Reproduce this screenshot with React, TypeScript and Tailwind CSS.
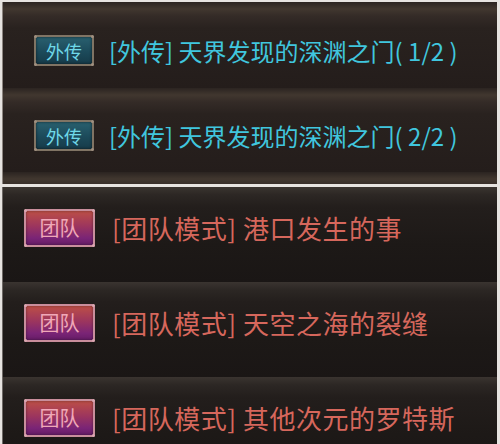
const font = { fontFamily: '"Noto Sans CJK SC", "Noto Sans", sans-serif' };

function QuestBadge({ kind }: { kind: "side" | "team" }) {
  if (kind === "side") {
    return (
      <div className="relative flex h-[31px] w-[60px] shrink-0 items-center justify-center rounded-[3px] border-2 border-[#807464] bg-[linear-gradient(180deg,#29606f_0%,#1c4a5a_55%,#163b49_100%)] shadow-[inset_0_0_3px_rgba(0,0,0,0.6)]">
        <span className="text-[18px] leading-none text-[#6fd8e8]">外传</span>
        <Corners color="bg-[#a09080]" />
      </div>
    );
  }
  return (
    <div className="relative flex h-[38px] w-[71px] shrink-0 items-center justify-center rounded-[3px] border-2 border-[#c98e9c] bg-[linear-gradient(180deg,#bd4f46_0%,#9c355e_45%,#7a2476_80%,#661c66_100%)] shadow-[inset_0_0_3px_rgba(0,0,0,0.4)]">
      <span className="text-[20px] leading-none text-[#f0a8b8]">团队</span>
      <Corners color="bg-[#dca8b2]" />
    </div>
  );
}

function Corners({ color }: { color: string }) {
  return (
    <>
      <span className={`absolute -left-[2px] -top-[2px] h-[3px] w-[3px] rounded-full ${color}`} />
      <span className={`absolute -right-[2px] -top-[2px] h-[3px] w-[3px] rounded-full ${color}`} />
      <span className={`absolute -bottom-[2px] -left-[2px] h-[3px] w-[3px] rounded-full ${color}`} />
      <span className={`absolute -bottom-[2px] -right-[2px] h-[3px] w-[3px] rounded-full ${color}`} />
    </>
  );
}

const sideQuests = ["1/2", "2/2"];
const teamQuests = ["港口发生的事", "天空之海的裂缝", "其他次元的罗特斯"];

export default function App() {
  return (
    <div className="flex h-[444px] w-[500px] flex-col gap-[3px] overflow-hidden bg-[#e6e3e0] pl-[2px] pr-[3px] pt-[2px]" style={font}>
      <div className="h-[182px] shrink-0 overflow-hidden border-l border-[#8c8580] bg-[#2a2320]">
        {sideQuests.map((part, i) => (
          <div
            key={part}
            className={`flex items-center gap-[15px] pl-[31px] pt-[11px] bg-[linear-gradient(180deg,#2b2421_0px,#41372f_7px,#342b27_14px,#29221f_26px,#241d1b_100%)] ${i === 0 ? "h-[86px]" : "h-[84px]"}`}
          >
            <QuestBadge kind="side" />
            <span className="whitespace-nowrap text-[24px] leading-none text-[#40c6de]">
              [外传] 天界发现的深渊之门( {part} )
            </span>
          </div>
        ))}
        <div className="h-[20px] bg-[linear-gradient(180deg,#2b2421_0px,#41372f_7px,#342b27_14px)]" />
      </div>
      <div className="flex-1 overflow-hidden border-l border-[#6e6966] bg-[#1e1a18]">
        {teamQuests.map((q) => (
          <div
            key={q}
            className="h-[95px] shrink-0 bg-[linear-gradient(180deg,#3a3430_0px,#2c2724_8px,#231e1c_20px,#1d1917_60%,#1a1615_100%)]"
          >
            <div className="flex h-[82px] items-center gap-[17px] pl-[21px]">
              <QuestBadge kind="team" />
              <span className="whitespace-nowrap text-[26px] leading-none tracking-[0.5px] text-[#d6675c]">
                [团队模式] {q}
              </span>
            </div>
          </div>
        ))}
      </div>
    </div>
  );
}
